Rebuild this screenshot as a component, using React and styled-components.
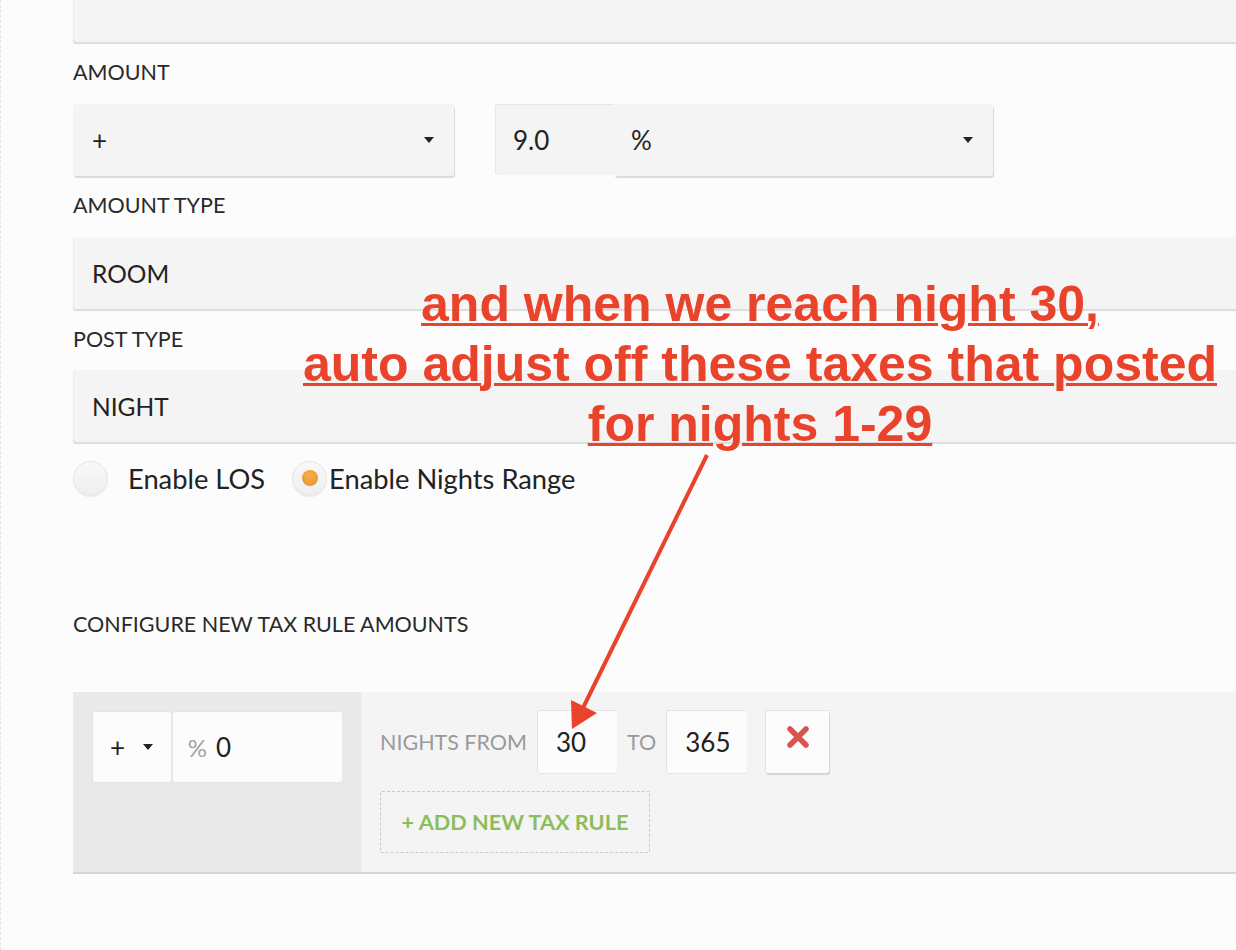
import React from 'react';
import styled, { createGlobalStyle } from 'styled-components'

const Global = createGlobalStyle`
body {
  margin: 0;
  background: #fcfcfc;
  font-family: "Lato", "Noto Sans", sans-serif;
  color: #222;
}
`

const Page = styled.div`
position: relative;
width: 1236px;
height: 950px;
overflow: hidden;
border-left: 1px dashed #e4e4e4;
box-sizing: border-box;
padding-left: 72px;
`

const Form = styled.div`
display: flex;
flex-direction: column;
margin-right: -12px;
`

const Label = styled.div`
font-size: 21.5px;
line-height: 26px;
height: 26px;
color: #2a2a2a;
margin-top: ${p => p.top}px;
margin-bottom: ${p => p.bottom}px;
`

const Field = styled.div`
height: ${p => (p.cut ? 42 : 72)}px;
background: #f4f4f4;
border-radius: ${p => (p.cut ? '0 0 3px 3px' : '3px')};
border-left: 1px solid #ebebeb;
box-shadow: 0 2px 1px #dcdcdc;
display: flex;
align-items: center;
padding-left: 18px;
font-size: 24.5px;
`

const AmountRow = styled.div`
display: flex;
align-items: flex-start;
`

const Select = styled.div`
width: ${p => p.w}px;
height: 72px;
box-sizing: border-box;
background: #f4f4f4;
border-radius: 3px;
box-shadow: 1px 2px 1px #dadada;
display: flex;
align-items: center;
justify-content: space-between;
padding: 0 20px 0 ${p => p.pad}px;
font-size: 26px;
margin-left: ${p => p.ml || 0}px;
`

const Caret = styled.span`
width: 0;
height: 0;
border-left: 5.5px solid transparent;
border-right: 5.5px solid transparent;
border-top: 6px solid #222;
`

const NumberBox = styled.div`
width: 119px;
height: 71px;
box-sizing: border-box;
margin-left: 41px;
background: #f4f4f4;
border: 1px solid #e6e6e6;
border-right: none;
border-bottom: none;
border-radius: 3px 0 0 3px;
display: flex;
align-items: center;
padding-left: 17px;
font-size: 26px;
`

const RadioRow = styled.div`
display: flex;
align-items: center;
height: 36px;
margin-top: 18px;
`

const RadioCircle = styled.span`
width: 35px;
height: 35px;
box-sizing: border-box;
border-radius: 50%;
background: linear-gradient(#f8f8f8, #efefef);
border: 1px solid #e4e4e4;
box-shadow: 0 1px 1px rgba(0, 0, 0, 0.08);
display: flex;
align-items: center;
justify-content: center;
margin-left: ${p => p.ml || 0}px;
`

const Dot = styled.span`
width: 16px;
height: 16px;
border-radius: 50%;
background: radial-gradient(circle at 45% 35%, #f6b04c, #e98f24);
`

const RadioText = styled.span`
font-size: 27.3px;
margin-left: ${p => p.ml}px;
color: #222;
`

const Panel = styled.div`
display: flex;
height: 180px;
margin-top: 55px;
border-bottom: 2px solid #d6d6d6;
`

const LeftPane = styled.div`
width: 288px;
box-sizing: border-box;
background: #e9e9e9;
padding: 19px;
display: flex;
align-items: flex-start;
gap: 1px;
`

const WhiteBox = styled.div`
height: ${p => p.h}px;
width: ${p => p.w}px;
box-sizing: border-box;
background: #fcfcfc;
border-radius: 3px;
border-top: 1px solid #e4e4e4;
border-left: 1px solid #e4e4e4;
box-shadow: ${p => (p.raised ? '1px 2px 1px #d4d4d4' : '0 1px 0 #e6e6e6')};
display: flex;
align-items: center;
font-size: 26px;
padding-left: ${p => p.pad || 0}px;
gap: ${p => p.gap || 0}px;
justify-content: ${p => p.center ? 'center' : 'flex-start'};
`

const Muted = styled.span`
color: #a3a3a3;
font-size: 24px;
`

const RightPane = styled.div`
flex: 1;
background: #f4f4f4;
padding: 18px 19px;
`

const NightsRow = styled.div`
display: flex;
align-items: center;
gap: 10px;
`

const GrayText = styled.span`
color: #9a9a9a;
font-size: 21.5px;
`

const XButton = styled(WhiteBox)`
margin-left: 8px;
padding-bottom: 10px;
`

const AddButton = styled.div`
margin-top: 18px;
width: 270px;
height: 62px;
box-sizing: border-box;
border: 1px dashed #c9c9c9;
border-radius: 2px;
display: flex;
align-items: center;
justify-content: center;
color: #8cbd5c;
font-size: 21.7px;
font-weight: 700;
`

const Note = styled.div`
position: absolute;
left: 279px;
top: 274px;
width: 960px;
text-align: center;
font-family: "Liberation Sans", Arial, sans-serif;
font-weight: 700;
font-size: 50px;
line-height: 60px;
color: #e9432b;
text-decoration: underline;
text-decoration-thickness: 3px;
`

const Arrow = styled.svg`
position: absolute;
left: 0;
top: 0;
pointer-events: none;
`

class App extends React.Component {
  render() {
    return (
      <Page>
        <Global />
        <Form>
          <Field cut />
          <Label top={17} bottom={19}>AMOUNT</Label>
          <AmountRow>
            <Select w={381} pad={19}>+<Caret /></Select>
            <NumberBox>9.0</NumberBox>
            <Select w={379} pad={17}>%<Caret /></Select>
          </AmountRow>
          <Label top={16} bottom={19}>AMOUNT TYPE</Label>
          <Field>ROOM</Field>
          <Label top={17} bottom={18}>POST TYPE</Label>
          <Field>NIGHT</Field>
          <RadioRow>
            <RadioCircle />
            <RadioText ml={20}>Enable LOS</RadioText>
            <RadioCircle ml={27}><Dot /></RadioCircle>
            <RadioText ml={2}>Enable Nights Range</RadioText>
          </RadioRow>
          <Label top={115} bottom={0}>CONFIGURE NEW TAX RULE AMOUNTS</Label>
          <Panel>
            <LeftPane>
              <WhiteBox w={79} h={71} pad={17} gap={18}>+<Caret /></WhiteBox>
              <WhiteBox w={171} h={71} pad={15} gap={9}><Muted>%</Muted>0</WhiteBox>
            </LeftPane>
            <RightPane>
              <NightsRow>
                <GrayText>NIGHTS FROM</GrayText>
                <WhiteBox w={80} h={63} pad={18}>30</WhiteBox>
                <GrayText>TO</GrayText>
                <WhiteBox w={81} h={63} pad={18}>365</WhiteBox>
                <XButton w={64} h={63} raised center>
                  <svg width="24" height="22" viewBox="0 0 24 22">
                    <path d="M4 3 L20 19 M20 3 L4 19" stroke="#d9534f" strokeWidth="5.5" strokeLinecap="round" />
                  </svg>
                </XButton>
              </NightsRow>
              <AddButton>+ ADD NEW TAX RULE</AddButton>
            </RightPane>
          </Panel>
        </Form>
        <Note>
          and when we reach night 30,<br />
          auto adjust off these taxes that posted<br />
          for nights 1-29
        </Note>
        <Arrow width="1236" height="950">
          <line x1="706" y1="455" x2="580" y2="712" stroke="#e9432b" strokeWidth="4" />
          <polygon points="571,729 570,700 596,713" fill="#e9432b" />
        </Arrow>
      </Page>
    );
  }
}

export default App;
